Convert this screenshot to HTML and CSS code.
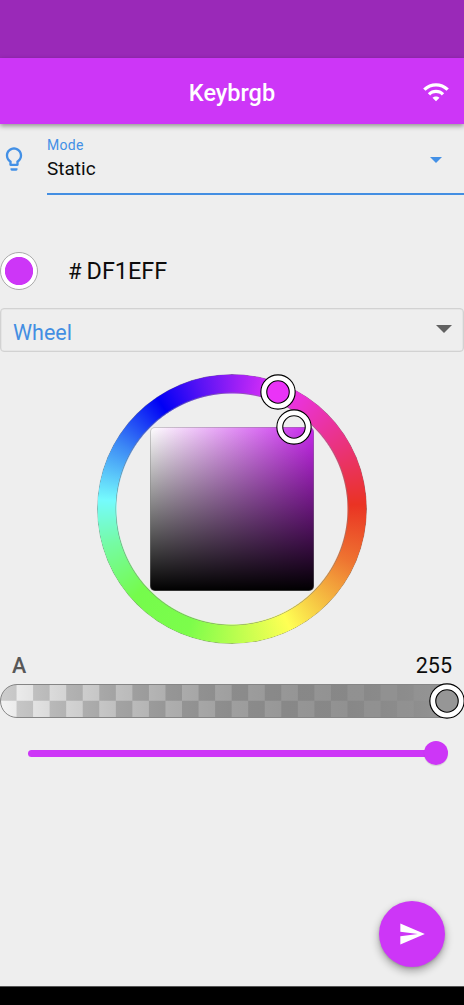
FILE: index.html
```html
<!DOCTYPE html>
<html lang="en">
<head>
<meta charset="utf-8">
<title>Keybrgb</title>
<link rel="stylesheet" href="styles.css">
</head>
<body>
<div class="screen">
  <div class="status-bar"></div>
  <header class="app-bar">
    <h1 class="title">Keybrgb</h1>
    <svg class="wifi" viewBox="0 0 24 24"><path d="M1 9l2 2c4.97-4.97 13.03-4.97 18 0l2-2C16.93 2.93 7.08 2.93 1 9zm8 8l3 3 3-3c-1.65-1.66-4.34-1.66-6 0zm-4-4l2 2c2.76-2.76 7.24-2.76 10 0l2-2C15.14 9.14 8.87 9.14 5 13z"/></svg>
  </header>
  <main class="content">
    <section class="mode">
      <svg class="bulb" viewBox="0 0 24 24"><path d="M9 21c0 .55.45 1 1 1h4c.55 0 1-.45 1-1v-1H9v1zm3-19C8.14 2 5 5.14 5 9c0 2.38 1.19 4.47 3 5.74V17c0 .55.45 1 1 1h6c.55 0 1-.45 1-1v-2.26c1.810-1.270 3-3.360 3-5.740 0-3.860-3.140-7-7-7zm2.850 11.100l-.85.6V16h-4v-2.300l-.85-.6C7.800 12.160 7 10.630 7 9c0-2.760 2.240-5 5-5s5 2.240 5 5c0 1.630-.8 3.160-2.150 4.100z"/></svg>
      <div class="mode-field">
        <div class="mode-text">
          <span class="label">Mode</span>
          <span class="value">Static</span>
        </div>
        <svg class="caret caret-blue" viewBox="0 0 12 6"><path d="M0 0h12L6 6z"/></svg>
      </div>
    </section>
    <section class="hex">
      <span class="swatch"></span>
      <span class="hash">#</span>
      <span class="hex-value">DF1EFF</span>
    </section>
    <section class="select">
      <span class="select-text">Wheel</span>
      <svg class="caret caret-grey" viewBox="0 0 16 8"><path d="M0 0h16L8 8z"/></svg>
    </section>
    <section class="wheel">
      <div class="ring"></div>
      <div class="palette"></div>
      <svg class="thumb hue-thumb" viewBox="0 0 36 36"><circle class="fill-hue" cx="18" cy="18" r="12"/><circle class="outer" cx="18" cy="18" r="14.200"/><circle class="inner" cx="18" cy="18" r="14.200"/></svg>
      <svg class="thumb shade-thumb" viewBox="0 0 36 36"><circle class="outer" cx="18" cy="18" r="14.200"/><circle class="inner" cx="18" cy="18" r="14.200"/></svg>
    </section>
    <section class="alpha-head">
      <span class="alpha-name">A</span>
      <span class="alpha-value">255</span>
    </section>
    <section class="alpha">
      <div class="alpha-track"></div>
      <svg class="thumb alpha-thumb" viewBox="0 0 36 36"><circle class="fill-alpha" cx="18" cy="18" r="12"/><circle class="outer" cx="18" cy="18" r="14.200"/><circle class="inner" cx="18" cy="18" r="14.200"/></svg>
    </section>
    <section class="slider">
      <div class="slider-track"></div>
      <span class="slider-knob"></span>
    </section>
  </main>
  <button class="fab" aria-label="Send"><svg viewBox="0 0 24 24"><path d="M2.010 21L23 12 2.010 3 2 10l15 2-15 2z"/></svg></button>
  <div class="nav-bar"></div>
</div>
</body>
</html>
```
FILE: styles.css
```css
* { box-sizing: border-box; }
body { margin: 0; font-family: Roboto, sans-serif; color: #0c0c0c; }
.screen { position: relative; width: 464px; height: 1005px; display: flex; flex-direction: column; background: #eee; overflow: hidden; }
.status-bar { height: 58px; background: #9a29b8; flex: none; }
.app-bar { height: 66px; flex: none; display: grid; grid-template-columns: 42px 1fr 42px; align-items: center; background: #cd36f7; box-shadow: 0 2px 5px rgba(0,0,0,.4); }
.title { grid-column: 2; margin: 3px 0 0; text-align: center; font-size: 23.500px; line-height: 28px; font-weight: 500; color: #fff; }
.wifi { width: 28px; height: 28px; fill: #fff; margin-top: 1px; }
.content { flex: 1; }
.mode { height: 71px; display: flex; }
.bulb { width: 28px; height: 28px; fill: #4390e6; margin: 21px 19px 0 0; flex: none; }
.mode-field { flex: 1; display: flex; justify-content: space-between; border-bottom: 2px solid #438ee2; }
.mode-text { display: flex; flex-direction: column; padding-top: 12px; }
.label { font-size: 14px; line-height: 18px; color: #4390e6; letter-spacing: .3px; }
.value { font-size: 19px; line-height: 30px; }
.caret { display: block; }
.caret-blue { width: 12px; height: 6px; fill: #4390e6; margin: 33px 22.500px 0 0; }
.hex { height: 38px; margin-top: 57px; display: flex; align-items: center; font-size: 23.400px; }
.swatch { width: 38px; height: 38px; border-radius: 50%; border: 1px solid #aaa; background: radial-gradient(circle, #cd36f7 13.700px, #fff 14.500px); }
.hash { margin-left: 30px; font-size: 22px; }
.hex-value { margin-left: 5px; }
.select { height: 44px; margin-top: 18px; border: 1.500px solid #d2d2d2; box-shadow: inset 0 0 0 .5px #ddd; border-radius: 4px; display: flex; justify-content: space-between; padding: 0 11px 0 12px; }
.select-text { font-size: 21.500px; line-height: 47px; color: #438ee2; }
.caret-grey { width: 16px; height: 8px; fill: #616161; margin-top: 15.500px; }
.wheel { position: relative; width: 270px; height: 270px; margin: 21.500px auto 0; display: grid; place-items: center; }
.ring, .palette { grid-area: 1 / 1; }
.ring { width: 270px; height: 270px; border-radius: 50%; background: radial-gradient(circle closest-side, transparent 115.500px, rgba(128,128,128,.5) 115.800px, rgba(128,128,128,.5) 116.300px, transparent 116.800px, transparent 134px, rgba(128,128,128,.5) 134.400px), conic-gradient(from 88deg, #ea3323, #ee7431 26deg, #f6c744 50deg, #ffff54 66deg, #b5fe4e 92deg, #7cfd4b 112deg, #75fb4c 140deg, #75fba4 166deg, #75fbfd 186deg, #3c88f5 212deg, #0000f5 238deg, #5a13f5 258deg, #a020f6 275deg, #ea33f7 294deg, #ea339c 322deg, #ea3323); -webkit-mask: radial-gradient(circle, transparent 115px, #000 116px); mask: radial-gradient(circle, transparent 115px, #000 116px); }
.palette { width: 164px; height: 164px; border-radius: 5px; border: 1px solid rgba(128,128,128,.4); background: linear-gradient(to bottom, transparent, #000), linear-gradient(to right, #fff, #c928ee); background-origin: border-box; }
.thumb { position: absolute; width: 36px; height: 36px; overflow: visible; fill: none; }
.outer { stroke: #000; stroke-width: 7px; }
.inner { stroke: #fff; stroke-width: 4.800px; }
.fill-hue { fill: #ea33f7; }
.fill-alpha { fill: #969696; }
.hue-thumb { left: 162.500px; top: 0; }
.shade-thumb { left: 179.300px; top: 35px; }
.alpha-head { height: 40.500px; display: flex; justify-content: space-between; padding: 9.500px 12px 0; line-height: 26px; }
.alpha-name { font-size: 21.500px; font-weight: 500; color: #585858; }
.alpha-value { font-size: 21.500px; }
.alpha { position: relative; height: 33.500px; }
.alpha-track { height: 33.500px; border-radius: 17px; border: 1px solid #858585; background: linear-gradient(to right, rgba(0,0,0,0), rgba(19,19,19,.125) 12.500%, rgba(38,38,38,.25) 25%, rgba(56,56,56,.375) 37.500%, rgba(75,75,75,.5) 50%, rgba(94,94,94,.625) 62.500%, rgba(112,112,112,.75) 75%, rgba(131,131,131,.875) 87.500%, #969696), conic-gradient(#f3f3f3 25%, #cdcdcd 0 50%, #f3f3f3 0 75%, #cdcdcd 0); background-origin: border-box; background-size: 100% 100%, 33.100px 33.500px; }
.alpha-thumb { left: 429.300px; top: -1px; }
.slider { position: relative; height: 24px; margin-top: 23px; padding: 9px 28px 0; }
.slider-track { height: 7px; border-radius: 4px; background: #cd36f7; }
.slider-knob { position: absolute; left: 423.500px; top: 0; width: 24px; height: 24px; border-radius: 50%; background: #cd36f7; box-shadow: 0 1px 1px rgba(0,0,0,.12); }
.fab { position: absolute; left: 379px; top: 901px; width: 66px; height: 66px; border: 0; border-radius: 50%; background: #cd36f7; display: grid; place-items: center; padding: 0; box-shadow: 0 4px 9px rgba(0,0,0,.33), 0 1px 3px rgba(0,0,0,.15); }
.fab svg { width: 28px; height: 28px; fill: #fff; }
.nav-bar { height: 19px; background: #000; border-top: 1px solid #555; flex: none; }
```
